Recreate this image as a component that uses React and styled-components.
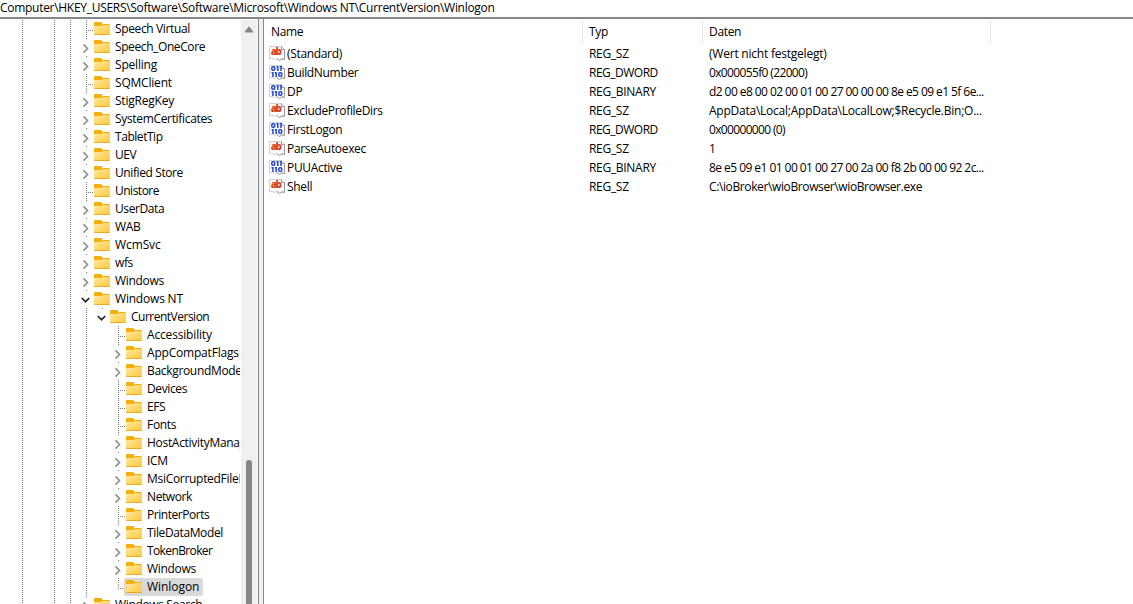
import React from "react";
import styled, { createGlobalStyle } from 'styled-components';

// track is extra letter spacing in px for names that need it
const treeItems = [
	{ name: 'Speech Virtual', track: -0.37 },
	{ name: 'Speech_OneCore', closed: true, track: -0.4 },
	{ name: 'Spelling', closed: true, track: -0.2 },
	{ name: 'SQMClient', track: -0.2 },
	{ name: 'StigRegKey', closed: true, track: -0.22 },
	{ name: 'SystemCertificates', closed: true, track: -0.33 },
	{ name: 'TabletTip', closed: true, track: -0.45 },
	{ name: 'UEV', closed: true, track: -0.5 },
	{ name: 'Unified Store', closed: true, track: -0.4 },
	{ name: 'Unistore', track: -0.5 },
	{ name: 'UserData', closed: true, track: -0.4 },
	{ name: 'WAB', closed: true },
	{ name: 'WcmSvc', closed: true, track: -0.1 },
	{ name: 'wfs', closed: true, track: -0.4 },
	{ name: 'Windows', closed: true },
	{ name: 'Windows NT', open: true, track: -0.2 },
	{ name: 'CurrentVersion', level: 1, open: true, last: true, track: -0.5 },
	{ name: 'Accessibility', level: 2, track: -0.17 },
	{ name: 'AppCompatFlags', level: 2, closed: true, track: -0.2 },
	{ name: 'BackgroundModel', level: 2, closed: true, track: -0.32 },
	{ name: 'Devices', level: 2, track: -0.38 },
	{ name: 'EFS', level: 2, track: -0.4 },
	{ name: 'Fonts', level: 2 },
	{ name: 'HostActivityManager', level: 2, closed: true },
	{ name: 'ICM', level: 2, closed: true },
	{ name: 'MsiCorruptedFileRecovery', level: 2, closed: true },
	{ name: 'Network', level: 2, closed: true, track: -0.4 },
	{ name: 'PrinterPorts', level: 2, track: -0.45 },
	{ name: 'TileDataModel', level: 2, closed: true, track: -0.38 },
	{ name: 'TokenBroker', level: 2, closed: true, track: -0.62 },
	{ name: 'Windows', level: 2, closed: true },
	{ name: 'Winlogon', level: 2, last: true, selected: true, track: -0.05 },
	{ name: 'Windows Search', closed: true, track: -0.35 },
];

const values = [
	{ name: '(Standard)', type: 'REG_SZ', data: '(Wert nicht festgelegt)', track: -0.22 },
	{ name: 'BuildNumber', type: 'REG_DWORD', data: '0x000055f0 (22000)', track: -0.64 },
	{ name: 'DP', type: 'REG_BINARY', data: 'd2 00 e8 00 02 00 01 00 27 00 00 00 8e e5 09 e1 5f 6e...', track: -0.57 },
	{ name: 'ExcludeProfileDirs', type: 'REG_SZ', data: 'AppData\\Local;AppData\\LocalLow;$Recycle.Bin;O...', track: -0.24 },
	{ name: 'FirstLogon', type: 'REG_DWORD', data: '0x00000000 (0)', track: -0.66 },
	{ name: 'ParseAutoexec', type: 'REG_SZ', data: '1' },
	{ name: 'PUUActive', type: 'REG_BINARY', data: '8e e5 09 e1 01 00 01 00 27 00 2a 00 f8 2b 00 00 92 2c...', track: -0.55 },
	{ name: 'Shell', type: 'REG_SZ', data: 'C:\\ioBroker\\wioBrowser\\wioBrowser.exe', track: -0.38 },
];

function FolderIcon() {
	return (
		<Folder viewBox="0 0 16 14">
			<defs>
				<linearGradient id="folder" x1="0" y1="0" x2="1" y2="1">
					<stop offset="0" stopColor="#ffe8a3" />
					<stop offset="1" stopColor="#ffc937" />
				</linearGradient>
			</defs>
			<path d="M0 1Q0 0 1 0H7L9 2H15Q16 2 16 3V8H0Z" fill="#f4ae08" />
			<path d="M0 4H7L9 3H15Q16 3 16 4V12Q16 13 15 13H1Q0 13 0 12Z" fill="url(#folder)" />
			<path d="M0.4 12.5H15.6" stroke="#e9a820" />
		</Folder>
	)
}

function Expander({ open }) {
	return (
		<ExpanderSvg viewBox="0 0 16 18">
			{ open
				? <path d="M4.7 8L8.5 11.7L12.3 8" stroke="#2b2b2b" />
				: <path d="M6.5 6.3L10.5 10.5L6.5 14.7" stroke="#929292" /> }
		</ExpanderSvg>
	)
}

function ValueIcon({ text }) {
	return (
		<ValueSvg viewBox="0 0 16 16">
			<path d="M0.5 1.5H12.5L15.5 4.5V14.5L13 13.5L10.5 15.5L8 13.5L5.5 14.5L3 13.5L0.5 14Z" fill="#fdfdfd" stroke="#cfcfcf" />
			<path d="M12.5 1.5V4.5H15.5V14.5L13 13.8L10.5 15.5L8 13.5" fill="none" stroke="#9a9a9a" />
			{ text
				? <text x="1.8" y="10" textLength="11.2" fontSize="10" fill="#d9431e">ab</text>
				: (
					<g fill="none" stroke="#2547d8" strokeWidth="1.5">
						<rect x="2.8" y="2.8" width="3" height="3.4" rx="1.2" />
						<path d="M8.8 2V7M12 2V7M3.9 8V13M7.2 8V13M2.5 8.8H4M5.8 8.8H7M7.5 2.8H9M10.7 2.8H12" />
						<rect x="9.8" y="8.8" width="3" height="3.4" rx="1.2" />
					</g>
				) }
		</ValueSvg>
	)
}

function TreeItem({ item }) {
	const level = item.level || 0;

	return (
		<TreeRow>
			<Guide $width={ 32 } />
			<Guide $width={ 16 } />
			<Guide $width={ 16 } />
			{ level > 0 && <Guide $width={ 16 } /> }
			{ level > 1 && <Gap /> }

			{ item.closed || item.open
				? <Toggle $bare={ item.open && item.last }><Expander open={ item.open } /></Toggle>
				: <Branch $last={ item.last }><Twig /></Branch> }

			<Label $selected={ item.selected }>
				<FolderIcon />
				<Name $track={ item.track }>{ item.name }</Name>
			</Label>
		</TreeRow>
	)
}

export default function App() {
	return (
		<Window>
			<GlobalStyle />
			<Address>Computer\HKEY_USERS\Software\Software\Microsoft\Windows NT\CurrentVersion\Winlogon</Address>

			<Panes>
				<Tree>
					{ treeItems.map((item, i) => <TreeItem key={ i } item={ item } />) }
				</Tree>

				<Scrollbar>
					<svg width="10" height="7"><path d="M5 0.8L9 6H1Z" fill="#858585" stroke="#858585" strokeLinejoin="round" /></svg>
					<Thumb />
				</Scrollbar>
				<Splitter />

				<List>
					<HeaderRow>
						<HeaderCell>Name</HeaderCell>
						<HeaderCell $inset={ 6 }>Typ</HeaderCell>
						<HeaderCell $inset={ 6 }>Daten</HeaderCell>
					</HeaderRow>

					{ values.map(value => (
						<ValueRow key={ value.name }>
							<NameCell>
								<ValueIcon text={ value.type === 'REG_SZ' } />
								{ value.name }
							</NameCell>
							<Cell $track={ value.type === 'REG_DWORD' ? -0.5 : undefined }>{ value.type }</Cell>
							<Cell $track={ value.track }>{ value.data }</Cell>
						</ValueRow>
					)) }
				</List>
			</Panes>
		</Window>
	)
}

const GlobalStyle = createGlobalStyle`
	* {
		box-sizing: border-box;
	}

	body {
		margin: 0;
		overflow: hidden;
		background-color: #ffffff;
	}
`
const Window = styled.div`
	display: flex;
	flex-direction: column;
	height: 100vh;
	font-family: "Open Sans", "Noto Sans", sans-serif;
	font-size: 12px;
	letter-spacing: -0.33px;
	color: #000000;
	white-space: pre;
`
const Address = styled.div`
	height: 19px;
	flex-shrink: 0;
	line-height: 16px;
	letter-spacing: -0.29px;
	border-bottom: 2px solid #828790;
`
const Panes = styled.div`
	display: flex;
	flex-grow: 1;
	min-height: 0;
`
const Tree = styled.div`
	width: 241px;
	flex-shrink: 0;
	padding: 1px 0 0 22px;
	border-right: 1px solid #ffffff;
	overflow: hidden;
`
const TreeRow = styled.div`
	display: flex;
	height: 18px;
`
const dots = 'repeating-linear-gradient(to bottom, #7b7b7b 0 1px, transparent 1px 2px)';

const Guide = styled.div`
	width: ${ props => props.$width }px;
	flex-shrink: 0;
	background: ${ dots } 0 0 / 1px 100% no-repeat;
`
const Gap = styled.div`
	width: 16px;
	flex-shrink: 0;
`
const Toggle = styled.div`
	width: 8px;
	flex-shrink: 0;
	background: ${ dots } 0 0 / 1px ${ props => props.$bare ? '2px' : '1px' } no-repeat;
`
const Branch = styled.div`
	width: 8px;
	flex-shrink: 0;
	padding: 10px 0 0 2px;
	background: ${ dots } 0 0 / 1px ${ props => props.$last ? '11px' : '100%' } no-repeat;
`
const Twig = styled.div`
	height: 1px;
	background: repeating-linear-gradient(to right, #7b7b7b 0 1px, transparent 1px 2px);
`
const ExpanderSvg = styled.svg`
	display: block;
	width: 16px;
	height: 18px;
	margin-left: -9px;
	fill: none;
	stroke-width: 1.7;
`
const Label = styled.div`
	display: flex;
	align-items: center;
	flex-shrink: 0;
	margin-left: -2px;
	padding: 0 4px 0 2px;
	border-radius: 2px;
	background-color: ${ props => props.$selected ? '#d9d9d9' : 'transparent' };
`
const Folder = styled.svg`
	width: 16px;
	height: 14px;
	margin-right: 5px;
`
const Name = styled.span`
	line-height: 18px;
	letter-spacing: ${ props => props.$track ?? -0.3 }px;
`
const Scrollbar = styled.div`
	display: flex;
	flex-direction: column;
	align-items: center;
	width: 16px;
	flex-shrink: 0;
	margin-top: 1px;
	padding-top: 6px;
	background-color: #f0f0f0;
`
const Thumb = styled.div`
	width: 6px;
	flex-grow: 1;
	margin-top: 427px;
	border-radius: 3px 3px 0 0;
	background-color: #858585;
`
const Splitter = styled.div`
	width: 6px;
	flex-shrink: 0;
	margin-left: 1px;
	border: solid #828790;
	border-width: 0 1px;
	background-color: #f0f0f0;
`
const List = styled.div`
	flex-grow: 1;
	padding-top: 1px;
`
const HeaderRow = styled.div`
	display: grid;
	grid-template-columns: 319px 120px 288px;
	height: 25px;
`
const HeaderCell = styled.div`
	height: 24px;
	padding-left: ${ props => props.$inset || 7 }px;
	line-height: 24px;
	border-right: 1px solid #e5e5e5;
`
const ValueRow = styled.div`
	display: grid;
	grid-template-columns: 318px 120px 288px;
	height: 19px;
	line-height: 18px;
`
const Cell = styled.div`
	padding-left: 7px;
	letter-spacing: ${ props => props.$track ?? -0.3 }px;
`
const NameCell = styled.div`
	display: flex;
	padding-left: 5px;
`
const ValueSvg = styled.svg`
	width: 16px;
	height: 16px;
	margin-right: 2px;
	font-family: "Open Sans", sans-serif;
	font-weight: 800;
	letter-spacing: 0;
`
